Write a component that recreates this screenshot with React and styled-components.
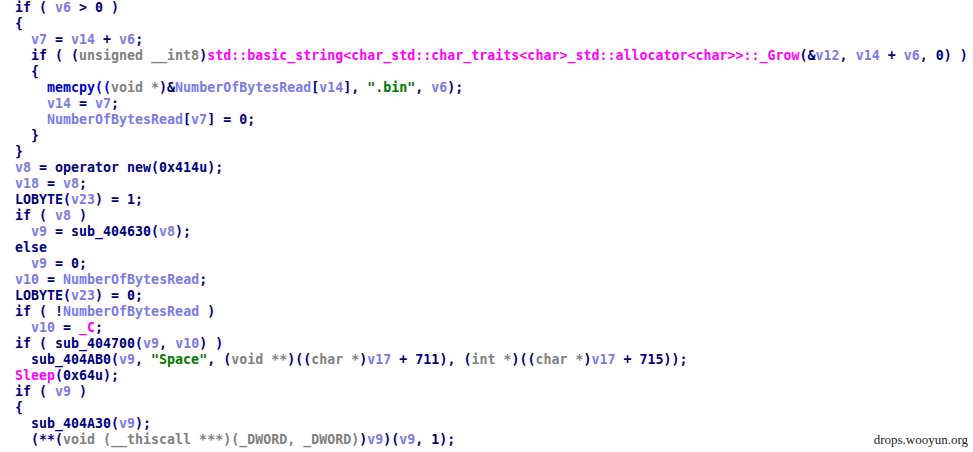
import React from 'react';
import styled, { createGlobalStyle } from 'styled-components';

const GlobalStyle = createGlobalStyle`
  html, body {
    margin: 0;
    padding: 0;
    background: #ffffff;
  }
`;

const tokenColors = {
  k: '#000080',
  v: '#7a7ae6',
  t: '#808080',
  m: '#ff00ff',
  s: '#007800',
  f: '#0000c8',
};

const Page = styled.div`
  position: relative;
  width: 973px;
  height: 452px;
  overflow: hidden;
  background: #ffffff;
`;

const Listing = styled.div`
  display: flex;
  flex-direction: column;
  padding: 0 0 0 15px;
  font-family: 'DejaVu Sans Mono', 'Liberation Mono', monospace;
  font-weight: bold;
  font-size: 13.3px;
  line-height: 16px;
  white-space: pre;
`;

const CodeLine = styled.div`
  height: 16px;
  padding-left: ${(p) => p.indent * 16}px;
`;

const Tok = styled.span`
  color: ${(p) => tokenColors[p.kind]};
`;

const Watermark = styled.div`
  position: absolute;
  right: 5px;
  bottom: 4px;
  font-family: 'Liberation Serif', serif;
  font-size: 13px;
  color: #222;
`;

// [indent, [kind, text], ...]
const lines = [
  [0, ['k', 'if ( '], ['v', 'v6'], ['k', ' > 0 )']],
  [0, ['k', '{']],
  [1, ['v', 'v7'], ['k', ' = '], ['v', 'v14'], ['k', ' + '], ['v', 'v6'], ['k', ';']],
  [
    1,
    ['k', 'if ( ('],
    ['t', 'unsigned __int8'],
    ['k', ')'],
    ['m', 'std::basic_string<char_std::char_traits<char>_std::allocator<char>>::_Grow'],
    ['k', '(&'],
    ['v', 'v12'],
    ['k', ', '],
    ['v', 'v14'],
    ['k', ' + '],
    ['v', 'v6'],
    ['k', ', 0) )'],
  ],
  [1, ['k', '{']],
  [
    2,
    ['f', 'memcpy(('],
    ['t', 'void *'],
    ['k', ')&'],
    ['v', 'NumberOfBytesRead'],
    ['k', '['],
    ['v', 'v14'],
    ['k', '], '],
    ['s', '".bin"'],
    ['k', ', '],
    ['v', 'v6'],
    ['k', ');'],
  ],
  [2, ['v', 'v14'], ['k', ' = '], ['v', 'v7'], ['k', ';']],
  [2, ['v', 'NumberOfBytesRead'], ['k', '['], ['v', 'v7'], ['k', '] = 0;']],
  [1, ['k', '}']],
  [0, ['k', '}']],
  [0, ['v', 'v8'], ['k', ' = operator new(0x414u);']],
  [0, ['v', 'v18'], ['k', ' = '], ['v', 'v8'], ['k', ';']],
  [0, ['k', 'LOBYTE('], ['v', 'v23'], ['k', ') = 1;']],
  [0, ['k', 'if ( '], ['v', 'v8'], ['k', ' )']],
  [1, ['v', 'v9'], ['k', ' = sub_404630('], ['v', 'v8'], ['k', ');']],
  [0, ['k', 'else']],
  [1, ['v', 'v9'], ['k', ' = 0;']],
  [0, ['v', 'v10'], ['k', ' = '], ['v', 'NumberOfBytesRead'], ['k', ';']],
  [0, ['k', 'LOBYTE('], ['v', 'v23'], ['k', ') = 0;']],
  [0, ['k', 'if ( !'], ['v', 'NumberOfBytesRead'], ['k', ' )']],
  [1, ['v', 'v10'], ['k', ' = '], ['m', '_C'], ['k', ';']],
  [0, ['k', 'if ( sub_404700('], ['v', 'v9'], ['k', ', '], ['v', 'v10'], ['k', ') )']],
  [
    1,
    ['k', 'sub_404AB0('],
    ['v', 'v9'],
    ['k', ', '],
    ['s', '"Space"'],
    ['k', ', ('],
    ['t', 'void **'],
    ['k', ')(('],
    ['t', 'char *'],
    ['k', ')'],
    ['v', 'v17'],
    ['k', ' + 711), ('],
    ['t', 'int *'],
    ['k', ')(('],
    ['t', 'char *'],
    ['k', ')'],
    ['v', 'v17'],
    ['k', ' + 715));'],
  ],
  [0, ['m', 'Sleep'], ['k', '(0x64u);']],
  [0, ['k', 'if ( '], ['v', 'v9'], ['k', ' )']],
  [0, ['k', '{']],
  [1, ['k', 'sub_404A30('], ['v', 'v9'], ['k', ');']],
  [
    1,
    ['k', '(**('],
    ['t', 'void (__thiscall ***)(_DWORD, _DWORD)'],
    ['k', ')'],
    ['v', 'v9'],
    ['k', ')('],
    ['v', 'v9'],
    ['k', ', 1);'],
  ],
];

const App = () => (
  <Page>
    <GlobalStyle />
    <Listing>
      {lines.map(([indent, ...toks], i) => (
        <CodeLine key={i} indent={indent}>
          {toks.map(([kind, text], j) => (
            <Tok key={j} kind={kind}>
              {text}
            </Tok>
          ))}
        </CodeLine>
      ))}
    </Listing>
    <Watermark>drops.wooyun.org</Watermark>
  </Page>
);

export default App;
